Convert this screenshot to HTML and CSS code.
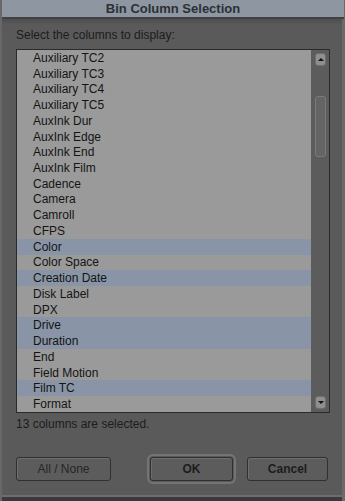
FILE: index.html
```html
<!DOCTYPE html>
<html lang="en">
    <head>
        <title>Bin Column Selection</title>
        <link rel="stylesheet" href="styles.css">
    </head>
    <body>
        <div class="dialog">
            <div class="title-bar">Bin Column Selection</div>

            <div class="content">
                <div class="label">Select the columns to display:</div>

                <div class="list-box">
                    <div class="items">
                        <div class="item">Auxiliary TC2</div>
                        <div class="item">Auxiliary TC3</div>
                        <div class="item">Auxiliary TC4</div>
                        <div class="item">Auxiliary TC5</div>
                        <div class="item">AuxInk Dur</div>
                        <div class="item">AuxInk Edge</div>
                        <div class="item">AuxInk End</div>
                        <div class="item">AuxInk Film</div>
                        <div class="item">Cadence</div>
                        <div class="item">Camera</div>
                        <div class="item">Camroll</div>
                        <div class="item">CFPS</div>
                        <div class="item selected">Color</div>
                        <div class="item">Color Space</div>
                        <div class="item selected">Creation Date</div>
                        <div class="item">Disk Label</div>
                        <div class="item">DPX</div>
                        <div class="item selected">Drive</div>
                        <div class="item selected">Duration</div>
                        <div class="item">End</div>
                        <div class="item">Field Motion</div>
                        <div class="item selected">Film TC</div>
                        <div class="item">Format</div>
                    </div>
                    <div class="scrollbar">
                        <span class="scroll-btn up"></span>
                        <div class="track">
                            <span class="thumb"></span>
                        </div>
                        <span class="scroll-btn down"></span>
                    </div>
                </div>

                <div class="status">13 columns are selected.</div>

                <div class="buttons">
                    <button class="btn all">All / None</button>
                    <button class="btn bold default">OK</button>
                    <button class="btn bold">Cancel</button>
                </div>
            </div>

            <div class="bottom-frame"></div>
        </div>
    </body>
</html>
```

FILE: styles.css
```css
body
{
    margin: 0;
    background-color: #5a5a5a;
    font-family: "Liberation Sans", Arial, sans-serif;
    overflow: hidden;
}

.dialog
{
    width: 345px;
    height: 501px;
    box-sizing: border-box;
    display: flex;
    flex-direction: column;
    background-color: #5a5a5a;
    border-left: 2px solid #686868;
    border-right: 3px solid #6a6a6a;
    box-shadow: inset -2px 0 0 #474747;
}

.title-bar
{
    height: 17px;
    line-height: 17px;
    text-align: center;
    font-size: 13px;
    font-weight: 700;
    color: #2c3036;
    background-color: #8d96a1;
    border-bottom: 2px solid #3e4042;
    margin-right: -2px;
}

.content
{
    flex: 1;
    display: flex;
    flex-direction: column;
    padding: 9px 12px 0 14px;
    background: linear-gradient(#4e4e4e, #5a5a5a 6px);
}

.label
{
    font-size: 12px;
    line-height: 15px;
    color: #1c1c1c;
    margin-bottom: 6px;
}

.list-box
{
    display: flex;
    height: 364px;
    box-sizing: border-box;
    border: 1px solid #2a2a2a;
    background-color: #9a9a9a;
}

.items
{
    flex: 1;
    display: flex;
    flex-direction: column;
}

.item
{
    flex: 1;
    display: flex;
    align-items: center;
    padding-left: 16px;
    font-size: 12px;
    color: #141414;
}

.selected
{
    background-color: #8995a6;
}

.scrollbar
{
    width: 18px;
    display: flex;
    flex-direction: column;
    align-items: center;
    background-color: #5c5c5c;
    padding: 3px 0 3px;
    box-sizing: border-box;
}

.scroll-btn
{
    width: 11px;
    height: 13px;
    box-sizing: border-box;
    border: 1px solid #6e6e6e;
    border-radius: 3px;
    background-color: #8f8f8f;
    position: relative;
}

.scroll-btn:after
{
    content: "";
    position: absolute;
    left: 2px;
    border-left: 3px solid transparent;
    border-right: 3px solid transparent;
}

.up:after
{
    top: 4px;
    border-bottom: 3px solid #111;
}

.down:after
{
    top: 4px;
    border-top: 3px solid #111;
}

.track
{
    flex: 1;
}

.thumb
{
    display: block;
    width: 11px;
    height: 61px;
    margin-top: 30px;
    box-sizing: border-box;
    border: 1px solid #7a7a7a;
    border-radius: 3px;
    background-color: #646464;
}

.status
{
    font-size: 12px;
    line-height: 15px;
    color: #1c1c1c;
    margin-top: 4px;
}

.buttons
{
    display: flex;
    margin-top: 25px;
    padding-left: 0;
}

.btn
{
    height: 24px;
    box-sizing: border-box;
    border: 1px solid #303030;
    border-radius: 3px;
    background-color: #5c5c5c;
    box-shadow: inset 1px 1px 0 #6e6e6e;
    font-family: "Liberation Sans", Arial, sans-serif;
    font-size: 12px;
    color: #262626;
    padding: 0;
}

.all
{
    width: 95px;
    margin-right: 39px;
}

.bold
{
    font-weight: 700;
    color: #1c1c1c;
}

.default
{
    width: 83px;
    margin-right: 14px;
    outline: 2px solid #747474;
    outline-offset: 1px;
}

.bold:last-child
{
    width: 81px;
}

.bottom-frame
{
    height: 4px;
    border-top: 2px solid #6e6e6e;
    background-color: #3a3a3a;
}
```
